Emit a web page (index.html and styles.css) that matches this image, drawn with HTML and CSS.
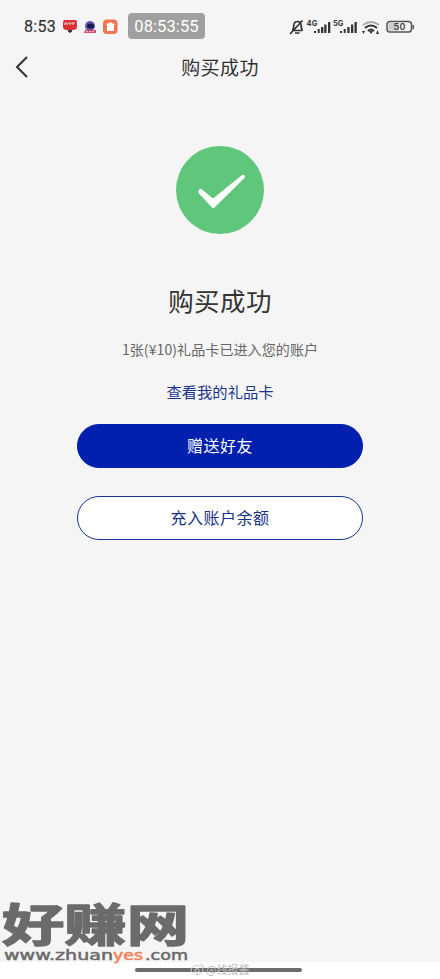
FILE: index.html
```html
<!DOCTYPE html>
<html lang="zh-CN">
<head>
<meta charset="utf-8">
<title>购买成功</title>
<link rel="stylesheet" href="styles.css">
</head>
<body>
<div class="screen">
  <header class="status">
    <span class="clock">8:53</span>
    <svg class="apps" width="57" height="18" viewBox="0 0 57 18">
      <path fill="#dc3038" d="M3 2h10q2 0 2 2v5q0 3-4 3H5q-4 0-4-3V4q0-2 2-2z"/>
      <path stroke="#fff" stroke-width="1" fill="none" opacity=".8" d="M3 7V5h2v2M6 5h2v2M9 5h4M11 5v2"/>
      <path fill="#333" d="M6 12h4v1.500l-2 1.500-2-1.500z"/>
      <circle cx="28" cy="8" r="5" fill="#6b55ac"/><ellipse cx="28.500" cy="8" rx="3.500" ry="2.500" fill="#191b50"/>
      <path fill="#d84b66" d="M23 12h11v3H22z"/><path stroke="#fff" stroke-width=".7" stroke-dasharray="2 1" d="M24 13.600h8"/>
      <rect x="41" y="1.500" width="14.500" height="14.500" rx="4" fill="#f07450"/>
      <path fill="#fff" d="M44.500 5.500H47l.5-1h2l.5 1h2.500V7h-.5v6h-7V7h-.5z"/>
    </svg>
    <span class="timer">08:53:55</span>
    <svg class="signals" width="128" height="20" viewBox="0 0 128 20">
      <g fill="none" stroke="#333" stroke-width="1.700">
        <path d="M3 13.500h10.500M3.500 13q1.200-1 1.200-4Q5 4.500 8.500 4.500t3.700 4.500q0 3 1.300 4.500M6 16h4.500M1 17L13.500 3.500"/>
      </g>
      <text class="net" x="17.500" y="8.500" textLength="11">4G</text>
      <text class="net" x="44" y="8.500" textLength="10.500">5G</text>
      <g fill="#333">
        <path d="M25 14h2v2h-2zM28.700 12h2v4h-2zM32 10h2.300v6H32zM35.200 7.500h2.300V16h-2.300zM39 5h2.300v11H39z"/>
        <path d="M51 14h2v2h-2zM54.700 12h2v4h-2zM58.300 10h2.300v6h-2.300zM62 7.500h2.300V16H62zM65.500 5h2.300v11h-2.300z"/>
      </g>
      <g fill="none" stroke-width="2">
        <path stroke="#aaa" d="M74 8q8-6 16 0"/>
        <path stroke="#333" d="M76 11q6-5 12 0M79 14q3-3 6 0"/>
      </g>
      <path fill="#333" d="M80 14h4l-2 3zM73 14h3l-1.500 3zM87 17l1.500-4 1.500 4z"/>
      <rect x="98" y="4.500" width="24.500" height="10.500" rx="3" fill="#f5f5f5" stroke="#555" stroke-width="1.500"/>
      <path fill="#ccc" d="M99.500 6H110v7.500H99.500z"/><path fill="#555" d="M123.500 8h1.500v4h-1.500z"/>
      <text class="charge" x="104.500" y="13" textLength="12">50</text>
    </svg>
  </header>
  <nav class="nav">
    <svg class="back" width="14" height="24" viewBox="0 0 14 24"><path d="M12 2L2 12l10 10" fill="none" stroke="#333" stroke-width="2"/></svg>
    <h1 class="title">购买成功</h1>
  </nav>
  <main class="result">
    <svg class="check" width="88" height="88" viewBox="0 0 88 88">
      <circle cx="44" cy="44" r="44" fill="#5fc67b"/>
      <path fill="#fff" d="M22.500 47q-1-1 .5-3t3-.5L37 52.500 66 29q2-.5 2.700.5t-.2 2.500L38.500 61.500q-1.500 1-2.500 0z"/>
    </svg>
    <h2 class="heading">购买成功</h2>
    <p class="detail">1张(¥10)礼品卡已进入您的账户</p>
    <a class="link">查看我的礼品卡</a>
    <button class="btn primary">赠送好友</button>
    <button class="btn outline">充入账户余额</button>
  </main>
  <footer class="bottom">
    <div class="handle"></div>
    <div class="credit">
      <svg width="16" height="14" viewBox="0 0 16 14"><g fill="none" stroke="#ccc"><ellipse cx="7" cy="8" rx="6" ry="4.500"/><circle cx="7" cy="8.500" r="2"/><path d="M10 2q4 0 4 4"/></g></svg>
      <span>@线报酱</span>
    </div>
  </footer>
  <svg class="brand" width="200" height="74" viewBox="0 0 200 74">
    <text class="brand-name" x="2" y="46.500" textLength="187" lengthAdjust="spacingAndGlyphs">好赚网</text>
    <text class="site" x="4" y="65" textLength="109" lengthAdjust="spacingAndGlyphs">www.zhuan</text>
    <text class="site accent" x="113" y="65" textLength="30" lengthAdjust="spacingAndGlyphs">yes</text>
    <text class="site" x="145" y="65" textLength="43" lengthAdjust="spacingAndGlyphs">.com</text>
  </svg>
</div>
</body>
</html>
```
FILE: styles.css
```css
* { box-sizing: border-box; }
body { margin: 0; background: #f5f5f5; color: #333; font-family: "Noto Sans", "Noto Sans CJK SC", sans-serif; }
.screen { position: relative; height: 979px; display: flex; flex-direction: column; overflow: hidden; }
.status { height: 40px; padding: 13px 24px 0; display: flex; align-items: flex-start; }
.clock { width: 38px; font: 400 16px/28px Roboto, sans-serif; letter-spacing: .3px; -webkit-text-stroke: .2px #333; }
.clock, .timer { white-space: nowrap; }
.apps { margin-top: 5px; }
.timer { width: 77px; margin-left: 9px; border-radius: 4px; background: #a0a0a0; color: #fff; text-align: center; font: 16.5px/27px Roboto, sans-serif; height: 26px; letter-spacing: .1px; }
.signals { margin: 4px -1px 0 auto; flex: none; }
.net { font: 700 7.5px Inter, sans-serif; fill: #333; }
.charge { font: 600 9px Inter, sans-serif; fill: #444; }
.nav { height: 54px; display: grid; grid-template-columns: 44px 1fr 44px; align-items: center; }
.back { margin-left: 15px; }
.title { margin: -1px 0 0; text-align: center; font: 400 19px/28px "Noto Sans CJK SC", sans-serif; letter-spacing: .4px; }
.result { flex: 1; padding-top: 52px; display: flex; flex-direction: column; align-items: center; }
.check { flex: none; }
.heading { margin: 46px 0 0; font: 400 25.500px/40px "Noto Sans CJK SC", sans-serif; letter-spacing: .4px; }
.detail { margin: 19px 0 0; color: #666; font: 14px/20px "Noto Sans CJK SC", sans-serif; letter-spacing: .1px; }
.link { margin-top: 20px; color: #1a3590; font: 15.300px/24px "Noto Sans CJK SC", sans-serif; }
.btn { width: 286px; height: 44px; padding: 0 0 2px; border: 1px solid #0020ad; border-radius: 22px; font: 16px/24px "Noto Sans CJK SC", sans-serif; letter-spacing: .5px; }
.primary { margin-top: 21px; background: #0020ad; color: #fff; }
.outline { margin-top: 28px; background: #fff; border-color: #17348f; color: #17308a; }
.bottom { position: relative; height: 17px; padding-top: 6px; background: #fff; }
.handle { width: 167px; height: 4px; margin: 0 auto 0 135px; border-radius: 2px; background: #6b6d6c; }
.credit { position: absolute; left: 190px; top: -1px; display: flex; align-items: center; color: #bbb; font: 11px/16px "Noto Sans CJK SC", sans-serif; white-space: nowrap; }
.brand { position: absolute; left: 0; top: 895px; overflow: visible; }
.brand-name { font: 700 45px "Noto Sans CJK SC", sans-serif; fill: #6b6b6b; stroke: #6b6b6b; stroke-width: 1.500px; stroke-linejoin: round; }
.site { font: 400 13.5px "DejaVu Sans", sans-serif; fill: #6b6b6b; stroke: #6b6b6b; stroke-width: .5px; }
.accent { fill: #f28055; stroke: #f28055; }
```
